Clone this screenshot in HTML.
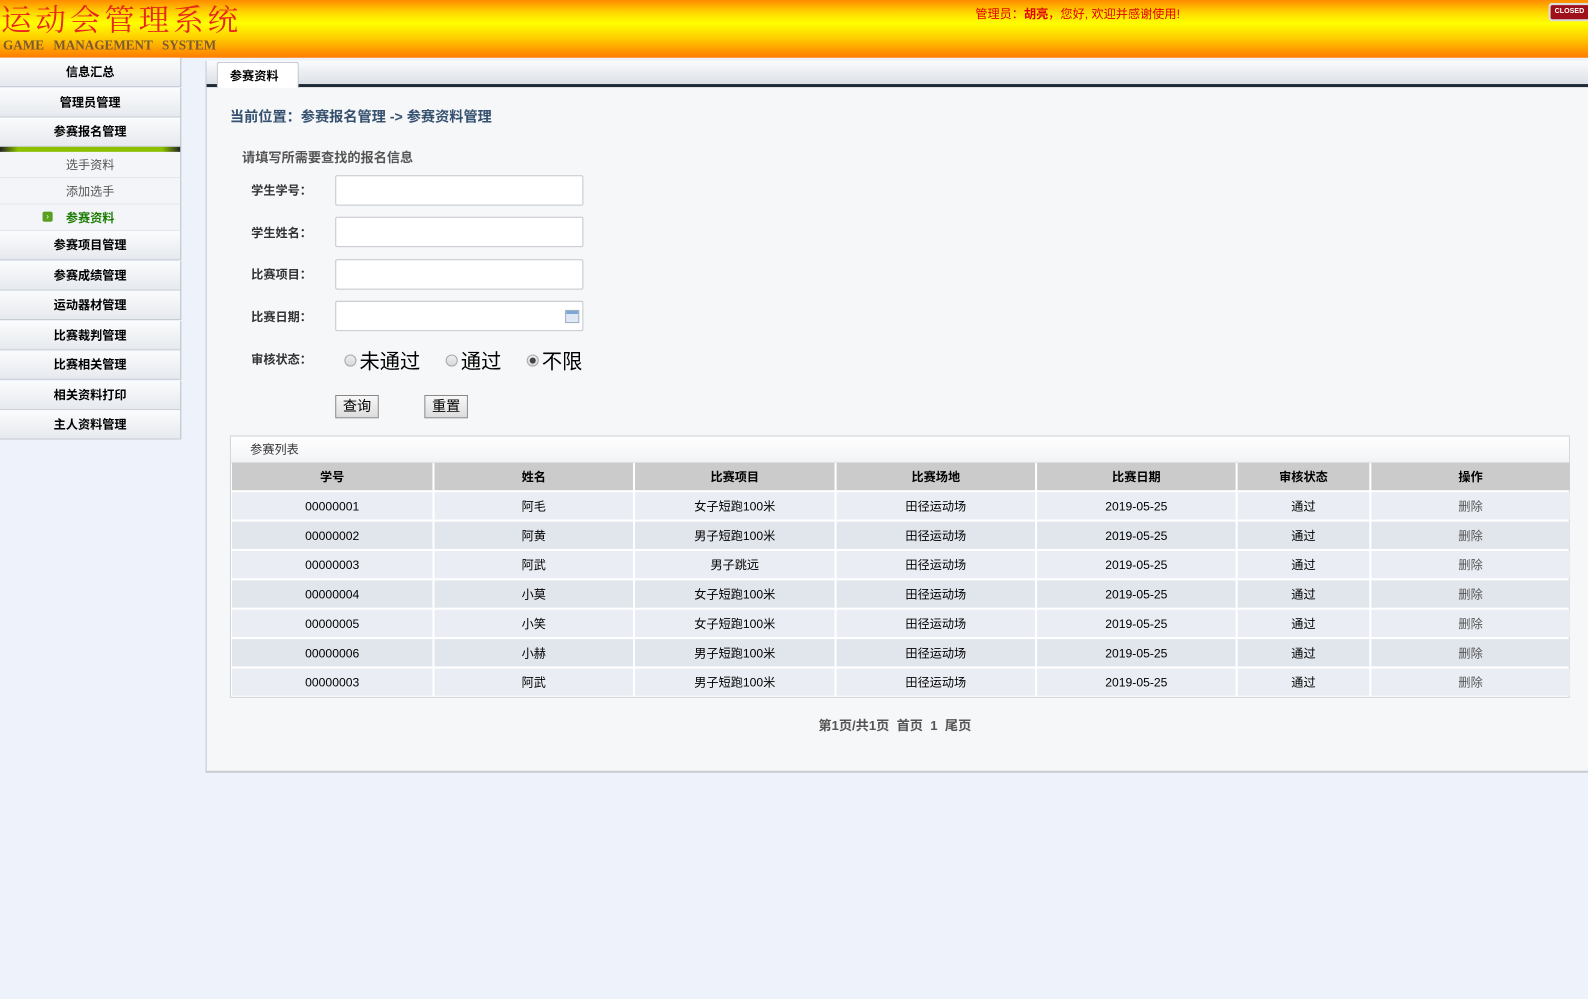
<!DOCTYPE html>
<html><head><meta charset="utf-8"><style>
*{margin:0;padding:0;box-sizing:border-box}
body{width:1588px;height:998px;background:#eef2fa;font-family:"Liberation Sans","Noto Sans CJK SC",sans-serif;font-size:12px;color:#000;position:relative;overflow:hidden}
#w{position:absolute;left:0;top:0;width:1568px;height:986px;transform:scale(1.0128);transform-origin:0 0}
.a{position:absolute}
#hd{left:0;top:0;width:1588px;height:57px;background:linear-gradient(#ff8a00 0%,#ffd800 22%,#ffff00 40%,#ffd000 65%,#ff7a00 100%)}
#t1{left:1px;top:-5px;font-family:"Liberation Serif","Noto Serif CJK SC",serif;font-size:30px;color:#e8261c;letter-spacing:4px;white-space:nowrap}
#t2{left:3px;top:37px;font-family:"Liberation Serif",serif;font-size:13px;color:#7a5a30;word-spacing:6px;font-weight:bold}
#wel{left:963px;top:5px;color:#e00000;font-size:12px}
#cls{left:1529px;top:3px;width:42px;height:18px;background:#ddd;border-radius:3px;padding:2px}
#cls div{background:#a0101a;color:#fff;font-size:7px;font-weight:bold;height:14px;line-height:14px;padding-left:4px;border-radius:2px}
.sb{left:0;width:179px;height:29px;background:linear-gradient(#fbfcfd,#e6e9ee);border-bottom:1px solid #c5cbd4;border-right:1px solid #b8bfc9;text-align:center;font-weight:bold;font-size:12px;line-height:28px}
.sub{left:0;width:179px;height:26px;background:#f3f5f8;border-bottom:1px solid #e0e4ea;border-right:1px solid #b8bfc9;text-align:center;color:#555;line-height:26px}
#main{left:203px;top:60px;width:1390px;height:703px;background:#f6f7f9;border-left:1px solid #c0c4cc;border-bottom:2px solid #c8ccd2}
#tabbar{left:204px;top:60px;width:1384px;height:26px;background:linear-gradient(#fafbfc,#dde1e6);border-bottom:3px solid #1e2a36}
#tab{left:214px;top:61px;width:81px;height:26px;background:#fff;border:1px solid #b9bec6;border-bottom:none;border-radius:3px 3px 0 0;font-weight:bold;line-height:26px;padding-left:12px}
.lbl{font-weight:bold;color:#333}
.inp{width:245px;height:30px;background:#fff;border:1px solid #c4c7cc;border-radius:2px}
.btn{height:23px;border:1px solid #888;background:linear-gradient(#f8f8f8,#dcdcdc);font-size:14px;line-height:21px;text-align:center}
.rad{width:12px;height:12px;border-radius:50%;border:1px solid #a8a8a8;background:linear-gradient(#eee,#d8d8d8)}
.rl{font-size:20px;color:#000}
#tbl{left:227px;top:430px;width:1323px;height:259px;border:1px solid #cfd2d6;background:#fff}
table{position:absolute;left:229px;top:457px;border-collapse:separate;border-spacing:2px;margin:-2px}
td,th{text-align:center;font-size:12px;height:27px;padding:0}
th{background:#cbcbcb;font-weight:bold}
tr.o td{background:#eaeef4}tr.e td{background:#e1e5ec}
</style></head><body><div id="w">
<div id="hd" class="a"></div>
<div id="t1" class="a">运动会管理系统</div>
<div id="t2" class="a">GAME MANAGEMENT SYSTEM</div>
<div id="wel" class="a">管理员：<b>胡亮</b>，您好, 欢迎并感谢使用!</div>
<div id="cls" class="a"><div>CLOSED</div></div>

<div class="a sb" style="top:57px">信息汇总</div>
<div class="a sb" style="top:87px">管理员管理</div>
<div class="a sb" style="top:116px">参赛报名管理</div>
<div class="a" style="left:0;top:145px;width:179px;height:5px;background:linear-gradient(90deg,#222,#8cc000 10%,#8cc000 90%,#222);border-right:1px solid #b8bfc9"></div>
<div class="a sub" style="top:150px">选手资料</div>
<div class="a sub" style="top:176px">添加选手</div>
<div class="a sub" style="top:202px;color:#1a7a00;font-weight:bold">参赛资料</div>
<div class="a" style="left:42px;top:209px;width:10px;height:10px;background:#5aa020;border-radius:2px;color:#fff;font-size:8px;line-height:10px;text-align:center">›</div>
<div class="a sb" style="top:228px">参赛项目管理</div>
<div class="a sb" style="top:258px">参赛成绩管理</div>
<div class="a sb" style="top:287px">运动器材管理</div>
<div class="a sb" style="top:317px">比赛裁判管理</div>
<div class="a sb" style="top:346px">比赛相关管理</div>
<div class="a sb" style="top:376px">相关资料打印</div>
<div class="a sb" style="top:405px">主人资料管理</div>

<div id="main" class="a"></div>
<div id="tabbar" class="a"></div>
<div id="tab" class="a">参赛资料</div>

<div class="a" style="left:227px;top:105px;font-size:14px;font-weight:bold;color:#34506e">当前位置：参赛报名管理 -&gt; 参赛资料管理</div>
<div class="a" style="left:239px;top:145px;font-size:13px;font-weight:bold;color:#555">请填写所需要查找的报名信息</div>

<div class="a lbl" style="left:248px;top:179px">学生学号：</div><div class="a inp" style="left:331px;top:173px"></div>
<div class="a lbl" style="left:248px;top:221px">学生姓名：</div><div class="a inp" style="left:331px;top:214px"></div>
<div class="a lbl" style="left:248px;top:262px">比赛项目：</div><div class="a inp" style="left:331px;top:256px"></div>
<div class="a lbl" style="left:248px;top:304px">比赛日期：</div><div class="a inp" style="left:331px;top:297px"></div>
<div class="a" style="left:558px;top:306px;width:14px;height:13px;background:linear-gradient(#7ea7d8 0 3px,#dfe8f4 3px);border:1px solid #9ab"></div>
<div class="a lbl" style="left:248px;top:346px">审核状态：</div>
<div class="a rad" style="left:340px;top:350px"></div><div class="a rl" style="left:355px;top:341px">未通过</div>
<div class="a rad" style="left:440px;top:350px"></div><div class="a rl" style="left:455px;top:341px">通过</div>
<div class="a rad" style="left:520px;top:350px"></div><div class="a" style="left:523px;top:353px;width:6px;height:6px;border-radius:50%;background:#444"></div><div class="a rl" style="left:535px;top:341px">不限</div>
<div class="a btn" style="left:331px;top:390px;width:43px">查询</div>
<div class="a btn" style="left:419px;top:390px;width:43px">重置</div>

<div id="tbl" class="a"></div>
<div class="a" style="left:228px;top:431px;width:1321px;height:26px;background:linear-gradient(#fff,#f3f4f6);border-bottom:1px solid #dde0e4"></div>
<div class="a" style="left:247px;top:435px;font-size:12px;color:#333">参赛列表</div>
<table>
<tr><th style="width:198px">学号</th><th style="width:196px">姓名</th><th style="width:197px">比赛项目</th><th style="width:196px">比赛场地</th><th style="width:196px">比赛日期</th><th style="width:130px">审核状态</th><th style="width:196px">操作</th></tr>
<tr class="o"><td>00000001</td><td>阿毛</td><td>女子短跑100米</td><td>田径运动场</td><td>2019-05-25</td><td>通过</td><td style="color:#555">删除</td></tr>
<tr class="e"><td>00000002</td><td>阿黄</td><td>男子短跑100米</td><td>田径运动场</td><td>2019-05-25</td><td>通过</td><td style="color:#555">删除</td></tr>
<tr class="o"><td>00000003</td><td>阿武</td><td>男子跳远</td><td>田径运动场</td><td>2019-05-25</td><td>通过</td><td style="color:#555">删除</td></tr>
<tr class="e"><td>00000004</td><td>小莫</td><td>女子短跑100米</td><td>田径运动场</td><td>2019-05-25</td><td>通过</td><td style="color:#555">删除</td></tr>
<tr class="o"><td>00000005</td><td>小笑</td><td>女子短跑100米</td><td>田径运动场</td><td>2019-05-25</td><td>通过</td><td style="color:#555">删除</td></tr>
<tr class="e"><td>00000006</td><td>小赫</td><td>男子短跑100米</td><td>田径运动场</td><td>2019-05-25</td><td>通过</td><td style="color:#555">删除</td></tr>
<tr class="o"><td>00000003</td><td>阿武</td><td>男子短跑100米</td><td>田径运动场</td><td>2019-05-25</td><td>通过</td><td style="color:#555">删除</td></tr>
</table>
<div class="a" style="left:808px;top:706px;font-size:13px;font-weight:bold;color:#555">第1页/共1页&nbsp; 首页&nbsp; 1&nbsp; 尾页</div>
</div></body></html>
